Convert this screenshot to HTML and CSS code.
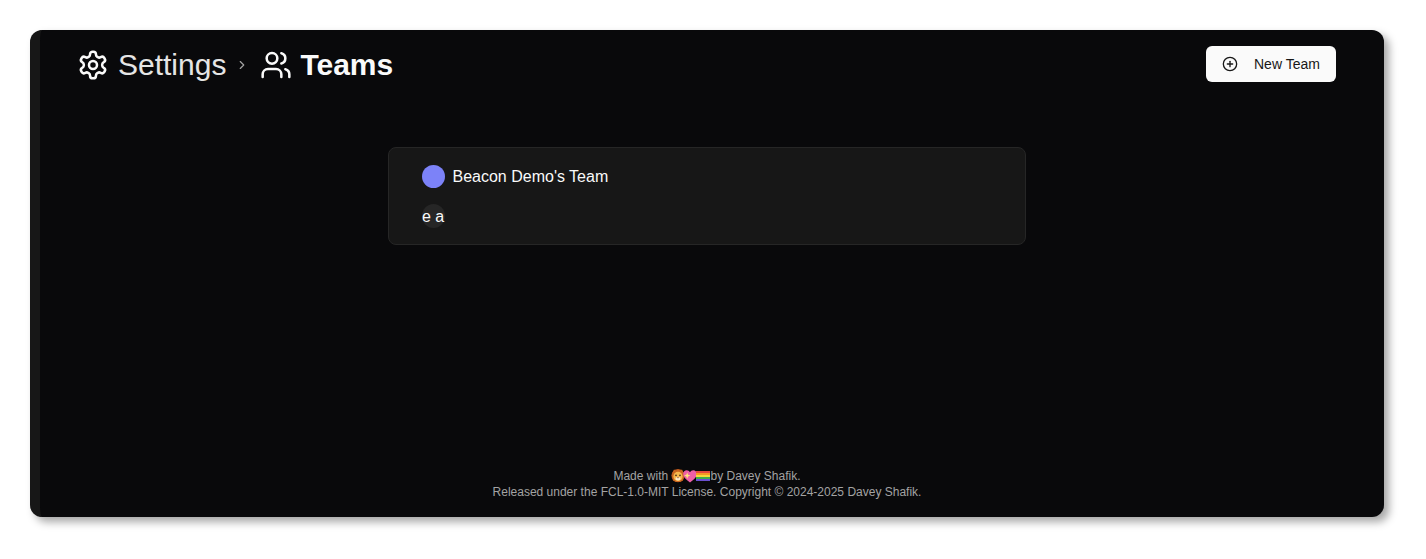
FILE: index.html
```html
<!DOCTYPE html>
<html lang="en">
<head>
<meta charset="utf-8">
<title>Teams</title>
<link rel="stylesheet" href="styles.css">
</head>
<body>
<div class="window">
  <header class="header">
    <nav class="crumbs">
      <svg class="icon-lg" viewBox="0 0 24 24" fill="none" stroke="currentColor" stroke-width="1.9" stroke-linecap="round" stroke-linejoin="round"><path d="M12.22 2h-.44a2 2 0 0 0-2 2v.18a2 2 0 0 1-1 1.73l-.43.25a2 2 0 0 1-2 0l-.15-.08a2 2 0 0 0-2.73.73l-.22.38a2 2 0 0 0 .73 2.73l.15.1a2 2 0 0 1 1 1.72v.51a2 2 0 0 1-1 1.74l-.15.09a2 2 0 0 0-.73 2.73l.22.38a2 2 0 0 0 2.73.73l.15-.08a2 2 0 0 1 2 0l.43.25a2 2 0 0 1 1 1.73V20a2 2 0 0 0 2 2h.44a2 2 0 0 0 2-2v-.18a2 2 0 0 1 1-1.73l.43-.25a2 2 0 0 1 2 0l.15.08a2 2 0 0 0 2.73-.73l.22-.39a2 2 0 0 0-.73-2.73l-.15-.08a2 2 0 0 1-1-1.74v-.5a2 2 0 0 1 1-1.74l.15-.09a2 2 0 0 0 .73-2.73l-.22-.38a2 2 0 0 0-2.73-.73l-.15.08a2 2 0 0 1-2 0l-.43-.25a2 2 0 0 1-1-1.73V4a2 2 0 0 0-2-2z"/><circle cx="12" cy="12" r="3"/></svg>
      <span class="crumb-light">Settings</span>
      <svg class="chevron" viewBox="0 0 24 24" fill="none" stroke="currentColor" stroke-width="2" stroke-linecap="round" stroke-linejoin="round"><path d="m9 18 6-6-6-6"/></svg>
      <svg class="icon-lg" viewBox="0 0 24 24" fill="none" stroke="currentColor" stroke-width="1.9" stroke-linecap="round" stroke-linejoin="round"><path d="M16 21v-2a4 4 0 0 0-4-4H6a4 4 0 0 0-4 4v2"/><circle cx="9" cy="7" r="4"/><path d="M22 21v-2a4 4 0 0 0-3-3.87"/><path d="M16 3.13a4 4 0 0 1 0 7.75"/></svg>
      <span class="crumb-bold">Teams</span>
    </nav>
    <button class="new-team" type="button">
      <svg class="icon-sm" viewBox="0 0 24 24" fill="none" stroke="currentColor" stroke-width="2" stroke-linecap="round" stroke-linejoin="round"><circle cx="12" cy="12" r="10"/><path d="M8 12h8"/><path d="M12 8v8"/></svg>
      <span class="new-team-label">New Team</span>
    </button>
  </header>

  <main class="content">
    <section class="card">
      <div class="team-row">
        <span class="team-dot"></span>
        <span class="team-name">Beacon Demo's Team</span>
      </div>
      <div class="member-row">
        <span class="member">e a</span>
      </div>
    </section>
  </main>

  <footer class="footer">
    <p class="footer-line">Made with
      <span class="emojis">
        <svg class="emoji" viewBox="0 0 14 14"><circle cx="7" cy="6.6" r="6.6" fill="#b5561c"/><path d="M1.6 3.4 3 .6l2 1 2-1.2 2 1.2 2-1 1.4 2.8 .6 4-1 4-3 1.6H5L2 11.4 1 7.4Z" fill="#c9651f"/><circle cx="7" cy="7.4" r="4.6" fill="#f6b84d"/><ellipse cx="7" cy="9.8" rx="2.6" ry="1.8" fill="#fde9c4"/><circle cx="5" cy="6.4" r=".8" fill="#3a2510"/><circle cx="9" cy="6.4" r=".8" fill="#3a2510"/><path d="M6 8.2h2L7 9.4Z" fill="#7a3a1a"/></svg>
        <svg class="emoji heart" viewBox="0 0 14 14"><path d="M7 13.4C2.8 10.4.2 7.8.2 4.9.2 2.7 1.8 1.2 3.7 1.2c1.4 0 2.6.7 3.3 2 .7-1.3 1.9-2 3.3-2 1.9 0 3.5 1.5 3.5 3.7C13.8 7.8 11.2 10.4 7 13.4Z" fill="#ee5fa7"/><path d="M4.2 3.4l.9 2.3 2.3.9-2.3.9-.9 2.3-.9-2.3-2.3-.9 2.3-.9Z" fill="#ffe27a"/></svg>
        <svg class="flag" viewBox="0 0 14 10"><rect y="0" width="14" height="2" fill="#e6483d"/><rect y="2" width="14" height="2" fill="#f59a23"/><rect y="4" width="14" height="2" fill="#f7d83a"/><rect y="6" width="14" height="2" fill="#3fae49"/><rect y="8" width="14" height="2" fill="#6a4fd0"/></svg>
      </span>by Davey Shafik.</p>
    <p class="footer-line">Released under the FCL-1.0-MIT License. Copyright © 2024-2025 Davey Shafik.</p>
  </footer>
</div>
</body>
</html>
```

FILE: styles.css
```css
* { box-sizing: border-box; }

html, body { height: 100%; }

body {
  margin: 0;
  padding: 30px 42px 42px 30px;
  background: #fff;
  font-family: "Liberation Sans", Arial, sans-serif;
  color: #fafafa;
}

.window {
  height: 487px;
  display: flex;
  flex-direction: column;
  background: #09090b;
  border-left: 10px solid #171717;
  padding-right: 10px;
  border-radius: 12px;
  box-shadow: 5px 5px 8px rgba(0, 0, 0, 0.35);
}

.header {
  display: flex;
  align-items: center;
  justify-content: space-between;
  padding: 16px 38px 0 37px;
  box-sizing: content-box;
  height: 35.5px;
}

.crumbs {
  display: flex;
  align-items: center;
  padding-top: 2.5px;
}

.icon-lg { width: 32px; height: 32px; flex: none; }

.crumb-light { font-size: 30px; font-weight: 400; color: #e5e5e5; margin-left: 9px; }

.crumb-bold { font-size: 30px; font-weight: 700; color: #fafafa; margin-left: 8px; }

.chevron { width: 14px; height: 14px; margin: 0 11px 0 9px; color: #a3a3a3; flex: none; }

.new-team {
  display: flex;
  align-items: center;
  gap: 16px;
  width: 130px;
  height: 35.5px;
  padding: 0 16px;
  border: 0;
  border-radius: 6px;
  background: #fafafa;
  color: #171717;
  font: 14px "Liberation Sans", Arial, sans-serif;
}

.new-team-label { padding-top: 1px; }

.icon-sm { width: 16px; height: 16px; flex: none; }

.content {
  flex: 1;
  display: flex;
  flex-direction: column;
  align-items: center;
  padding-top: 65.5px;
}

.card {
  width: 638px;
  height: 98px;
  padding: 16px 32.5px;
  background: #171717;
  border: 1px solid #262626;
  border-radius: 8px;
}

.team-row {
  display: flex;
  align-items: center;
  gap: 8px;
  height: 24px;
}

.team-dot { width: 23px; height: 23px; border-radius: 50%; background: #7c82f8; }

.team-name { font-size: 16px; color: #fafafa; padding-top: 2px; }

.member-row { margin-top: 16px; }

.member {
  display: block;
  width: 23px;
  height: 24px;
  border-radius: 50%;
  background: #262626;
  font-size: 16px;
  line-height: 26px;
  text-align: center;
  white-space: nowrap;
  color: #fafafa;
}

.footer {
  padding-bottom: 17px;
  text-align: center;
  font-size: 12px;
  line-height: 16px;
  color: #a3a3a3;
}

.footer-line { margin: 0; }

.emojis { display: inline-flex; align-items: center; vertical-align: -3px; }

.emoji { width: 14px; height: 14px; }

.heart { margin-left: -2px; }

.flag { width: 14px; height: 10px; margin-left: -1px; }
```
